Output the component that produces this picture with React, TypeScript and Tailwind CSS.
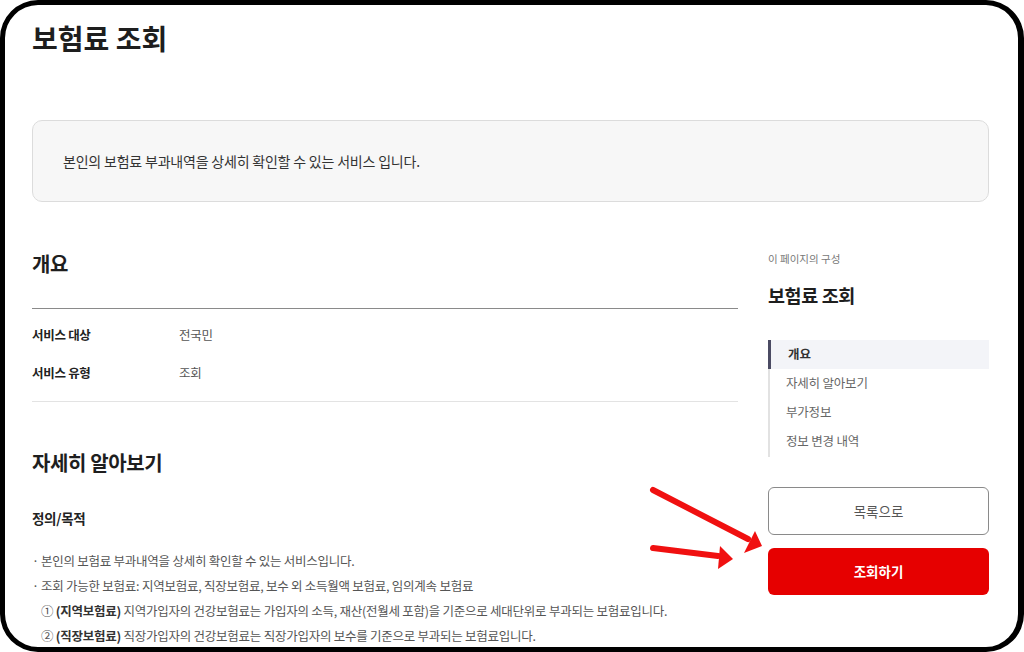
import React from "react";

const font = { fontFamily: '"Noto Sans CJK KR", "Noto Sans", sans-serif' };

const overview = [
  { label: "서비스 대상", value: "전국민" },
  { label: "서비스 유형", value: "조회" },
];

const toc = ["개요", "자세히 알아보기", "부가정보", "정보 변경 내역"];

function Arrows() {
  return (
    <svg className="absolute inset-0 pointer-events-none" width="1024" height="652" viewBox="0 0 1024 652">
      <g stroke="#f01010" strokeWidth="6" strokeLinecap="round" fill="none">
        <line x1="653" y1="490" x2="748" y2="539" />
        <line x1="653" y1="548" x2="718" y2="556" />
      </g>
      <g fill="#f01010">
        <polygon points="762,546 755,531 744,553" />
        <polygon points="733,559 720,546 718,569" />
      </g>
    </svg>
  );
}

export default function App() {
  return (
    <div className="w-[1024px] h-[652px] bg-white" style={font}>
      <div className="relative w-full h-full border-[5px] border-r-[6px] border-black rounded-[38px] overflow-hidden bg-white">
        <div className="pl-[27px] pr-[29px] pt-[13px]">
          <h1 className="text-[28px] leading-[40px] font-bold text-[#1e1e1e]">보험료 조회</h1>

          <div className="mt-[62px] h-[82px] rounded-[10px] border border-[#dcdcdc] bg-[#f7f7f7] flex items-center pl-[30px]">
            <p className="text-[14px] tracking-[-0.2px] text-[#333]">
              본인의 보험료 부과내역을 상세히 확인할 수 있는 서비스 입니다.
            </p>
          </div>

          <div className="mt-[38px] flex gap-[30px]">
            <main className="w-[706px]">
              <h2 className="mt-[10px] text-[20px] leading-[28px] font-bold tracking-[-0.4px] text-[#1e1e1e] pb-[30px] border-b border-[#8a8a8a]">
                개요
              </h2>
              <dl className="py-[7px] pb-[9px] border-b border-[#e3e3e3]">
                {overview.map((row) => (
                  <div key={row.label} className="h-[38px] flex items-center text-[12.5px] tracking-[-0.3px]">
                    <dt className="w-[147px] font-bold text-[#222]">{row.label}</dt>
                    <dd className="text-[#555]">{row.value}</dd>
                  </div>
                ))}
              </dl>

              <h2 className="mt-[47px] text-[20px] leading-[28px] font-bold tracking-[-0.4px] text-[#1e1e1e]">
                자세히 알아보기
              </h2>
              <h3 className="mt-[31px] text-[13.5px] leading-[20px] font-bold tracking-[-0.3px] text-[#222]">
                정의/목적
              </h3>
              <ul className="mt-[20px] text-[12.5px] leading-[25px] tracking-[-0.25px] text-[#555]">
                <li className="flex">
                  <span className="w-[9px] shrink-0">·</span>
                  본인의 보험료 부과내역을 상세히 확인할 수 있는 서비스입니다.
                </li>
                <li className="flex">
                  <span className="w-[9px] shrink-0">·</span>
                  조회 가능한 보험료: 지역보험료, 직장보험료, 보수 외 소득월액 보험료, 임의계속 보험료
                </li>
                <li className="pl-[9px] whitespace-nowrap">
                  ① <b className="text-[#333]">(지역보험료)</b> 지역가입자의 건강보험료는 가입자의 소득, 재산(전월세 포함)을 기준으로 세대단위로 부과되는 보험료입니다.
                </li>
                <li className="pl-[9px] whitespace-nowrap">
                  ② <b className="text-[#333]">(직장보험료)</b> 직장가입자의 건강보험료는 직장가입자의 보수를 기준으로 부과되는 보험료입니다.
                </li>
              </ul>
            </main>

            <aside className="w-[221px]">
              <p className="mt-[11px] text-[10.5px] leading-[16px] text-[#777]">이 페이지의 구성</p>
              <p className="mt-[15px] text-[18.5px] leading-[26px] font-bold tracking-[-0.4px] text-[#1e1e1e]">보험료 조회</p>
              <nav className="mt-[32px] border-l-2 border-[#e2e2e2] pb-px">
                {toc.map((item, i) => (
                  <div
                    key={item}
                    className={
                      i === 0
                        ? "h-[29px] -ml-[2px] pl-[17px] flex items-center border-l-[3px] border-[#4b4b63] bg-[#f3f4f8] text-[12.5px] font-bold text-[#333]"
                        : "h-[29px] pl-[16px] flex items-center text-[12.5px] tracking-[-0.2px] text-[#666]"
                    }
                  >
                    {item}
                  </div>
                ))}
              </nav>
              <button className="mt-[30px] w-full h-[48px] rounded-[6px] border border-[#8a8a8a] bg-white text-[13.5px] text-[#555]">
                목록으로
              </button>
              <button className="mt-[13px] w-full h-[47px] rounded-[6px] bg-[#e60000] text-[13.5px] font-bold text-white">
                조회하기
              </button>
            </aside>
          </div>
        </div>
        <div className="absolute -left-[5px] -top-[5px]">
          <Arrows />
        </div>
      </div>
    </div>
  );
}
